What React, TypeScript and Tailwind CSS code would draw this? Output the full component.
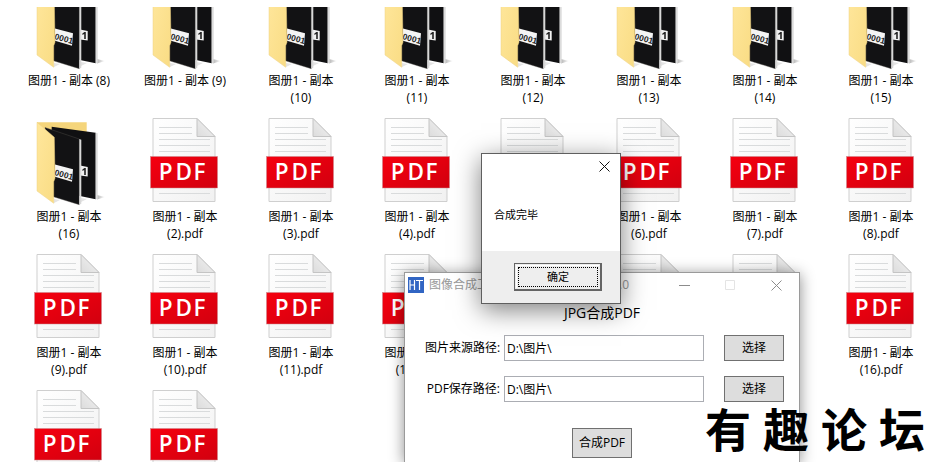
import React, { useState } from 'react';

type FileKind = 'folder' | 'pdf';

interface FileItem {
  id: number;
  kind: FileKind;
  name?: string;
}

const folders: FileItem[] = [8, 9, 10, 11, 12, 13, 14, 15, 16].map((n) => ({
  id: n,
  kind: 'folder',
  name: `图册1 - 副本 (${n})`,
}));

const pdfs: FileItem[] = [2, 3, 4, 5, 6, 7, 8, 9, 10, 11, 12, 13, 14, 15, 16].map((n) => ({
  id: 100 + n,
  kind: 'pdf',
  name: `图册1 - 副本 (${n}).pdf`,
}));

// The last two files sit below the fold, only their icons show
const files: FileItem[] = [...folders, ...pdfs, { id: 201, kind: 'pdf' }, { id: 202, kind: 'pdf' }];

const PdfIcon = () => (
  <svg width="80" height="88" viewBox="0 0 80 88" className="block">
    <defs>
      <linearGradient id="page" x1="0" y1="0" x2="1" y2="1">
        <stop offset="0" stopColor="#ffffff" />
        <stop offset="1" stopColor="#f1f1f1" />
      </linearGradient>
      <linearGradient id="fold" x1="0" y1="1" x2="1" y2="0">
        <stop offset="0" stopColor="#dcdcdc" />
        <stop offset="1" stopColor="#f4f4f4" />
      </linearGradient>
      <linearGradient id="band" x1="0" y1="0" x2="1" y2="1">
        <stop offset="0" stopColor="#f5000f" />
        <stop offset="1" stopColor="#d2000f" />
      </linearGradient>
    </defs>
    <path d="M8 .5h44l18 18v65H8z" fill="url(#page)" stroke="#cfcfcf" />
    <path d="M52 .5v18h18z" fill="url(#fold)" stroke="#c4c4c4" strokeLinejoin="round" />
    <path d="M14 9.5h33M14 15.5h33M14 21.5h51M14 27.5h51M14 33.5h51M14 75.5h51" stroke="#d9dbdc" />
    <rect x="5.5" y="38.5" width="67" height="31.5" fill="url(#band)" stroke="#c98a8e" strokeWidth=".5" />
    <text
      x="13.8 30.4 48.6"
      y="62"
      fill="#fff"
      fontFamily="Open Sans, Noto Sans, sans-serif"
      fontSize="22.5"
      fontWeight="600"
    >
      PDF
    </text>
  </svg>
);

const FolderIcon = () => (
  <svg width="80" height="88" viewBox="0 0 80 88" className="block">
    <defs>
      <linearGradient id="flap" x1="0" y1="0" x2="1" y2="1">
        <stop offset="0" stopColor="#ffe79c" />
        <stop offset="1" stopColor="#f9dc84" />
      </linearGradient>
      <linearGradient id="shade" x1="0" y1="0" x2="1" y2="0">
        <stop offset="0" stopColor="#b5b5b5" />
        <stop offset="1" stopColor="#ffffff" />
      </linearGradient>
    </defs>
    <path d="M68 77l8 2-8 2.5z" fill="url(#shade)" />
    <path d="M25 81l6 1-6 3z" fill="#e4e4e4" />
    <path d="M52 80l6 1-6 3z" fill="#e4e4e4" />
    <path d="M8 4.3h49.7V40H8z" fill="#f5d57b" />
    <path d="M22.7 8.7l44 6v66.6L22 72z" fill="#101012" />
    <path d="M66.7 14.7l2 .6v65.5l-2 .7z" fill="#dcdcdc" />
    <path d="M51 47.6l7.7 1.3v9.6L51 57.5z" fill="#f2f2f2" />
    <path d="M53.4 51.6l2-1.6h1.4v7h-1.6v-5l-1.8 1z" fill="#222" />
    <path d="M16 9.5l34.3 11.5v65.7L22 78z" fill="#121214" stroke="#55534e" strokeWidth=".4" />
    <path d="M50.3 21l2 .7v64l-2 1z" fill="#d8d8d8" />
    <path d="M26 46.5l18 4.8-1 12.4-17-5z" fill="#f4f4f4" />
    <text
      x="25"
      y="57"
      transform="rotate(15 25 57)"
      fill="#1c1c1c"
      fontFamily="Liberation Sans, Arial, sans-serif"
      fontSize="8.5"
      fontWeight="700"
    >
      0001
    </text>
    <path d="M8 4.3l17.3 15 .7 41-1.3 3.4v21.6L8 73z" fill="url(#flap)" stroke="#ecd184" strokeWidth=".5" />
  </svg>
);

const FileTile = ({ file }: { file: FileItem }) => (
  <div className="flex h-[136px] flex-col items-center">
    {file.kind === 'folder' ? <FolderIcon /> : <PdfIcon />}
    {file.name && (
      <div className="mt-[2px] w-[86px] text-center text-xs leading-[17px] text-black">{file.name}</div>
    )}
  </div>
);

interface PathRowProps {
  id: string;
  label: string;
  value: string;
  onChange: (value: string) => void;
}

const PathRow = ({ id, label, value, onChange }: PathRowProps) => (
  <div className="flex items-center">
    <label htmlFor={id} className="w-[75px] text-right text-xs whitespace-nowrap">
      {label}
    </label>
    <input
      id={id}
      type="text"
      value={value}
      onChange={(e) => onChange(e.target.value)}
      className="ml-1 h-[26px] min-w-0 flex-1 border border-[#abadb3] bg-white px-[2px] text-xs outline-none"
    />
    <button type="button" className="ml-5 h-[26px] w-[60px] border border-[#707070] bg-[#dddddd] text-xs">
      选择
    </button>
  </div>
);

const ConverterWindow = () => {
  const [source, setSource] = useState('D:\\图片\\');
  const [target, setTarget] = useState('D:\\图片\\');

  return (
    <section className="absolute top-[272px] bottom-0 left-[404px] w-[396px] border border-b-0 border-[#9a9a9a] bg-white shadow-[0_2px_14px_rgba(0,0,0,0.45)]">
      <header className="flex h-6 items-center pl-[3px] text-xs text-[#999999]">
        <svg width="16" height="16" viewBox="0 0 16 16">
          <rect width="16" height="16" fill="#3165c3" />
          <path d="M2 3v10M6.5 3v10M2 8h4.5M8 3.5h7M11.5 3.5V13" stroke="#fff" strokeWidth="1.2" fill="none" />
        </svg>
        <div className="ml-[5px] flex w-[200px] justify-between">
          <span>图像合成工具</span>
          <span>1.0</span>
        </div>
        <div className="ml-auto flex">
          <button type="button" aria-label="最小化" className="flex h-6 w-[46px] items-center justify-center">
            <svg width="11" height="11" viewBox="0 0 11 11" stroke="#8c8c8c">
              <path d="M0 5.5h11" />
            </svg>
          </button>
          <button type="button" disabled aria-label="最大化" className="flex h-6 w-[46px] items-center justify-center">
            <svg width="11" height="11" viewBox="0 0 11 11" fill="none" stroke="#e4e4e4">
              <path d="M.5.5h9v9h-9z" />
            </svg>
          </button>
          <button type="button" aria-label="关闭" className="flex h-6 w-[46px] items-center justify-center">
            <svg width="11" height="11" viewBox="0 0 11 11" stroke="#8c8c8c">
              <path d="M.5.5l10 10M10.5.5l-10 10" />
            </svg>
          </button>
        </div>
      </header>
      <h1 className="mt-[6px] text-center text-sm leading-5">JPG合成PDF</h1>
      <form className="mt-3 flex flex-col gap-[15px] pr-[15px] pl-5" onSubmit={(e) => e.preventDefault()}>
        <PathRow id="source" label="图片来源路径:" value={source} onChange={setSource} />
        <PathRow id="target" label="PDF保存路径:" value={target} onChange={setTarget} />
      </form>
      <div className="mt-[26px] flex justify-center">
        <button type="button" className="h-[30px] w-[60px] border border-[#707070] bg-[#dddddd] text-xs whitespace-nowrap">
          合成PDF
        </button>
      </div>
    </section>
  );
};

const MessageBox = () => (
  <div
    role="dialog"
    aria-label="合成完毕"
    className="absolute top-[153px] left-[481px] w-[140px] border border-[#5f5f5f] bg-white shadow-[0_6px_24px_rgba(0,0,0,0.5)]"
  >
    <div className="flex justify-end">
      <button type="button" aria-label="关闭" className="flex h-6 w-[31px] items-center justify-center">
        <svg width="11" height="11" viewBox="0 0 11 11" stroke="#111">
          <path d="M.5.5l10 10M10.5.5l-10 10" />
        </svg>
      </button>
    </div>
    <p className="px-3 pt-7 pb-7 text-[11px] leading-[17px]">合成完毕</p>
    <div className="flex justify-end bg-[#eeeeee] pt-3 pr-[18px] pb-3">
      <button type="button" className="h-7 w-[88px] border border-r-2 border-b-2 border-[#646464] bg-[#eeeeee] p-px text-[11px]">
        <span className="flex h-full items-center justify-center border-t border-l border-white p-px">
          <span className="flex h-full w-full items-center justify-center border border-dotted border-black">确定</span>
        </span>
      </button>
    </div>
  </div>
);

const App = () => {
  return (
    <div className="relative h-screen w-full overflow-hidden bg-white pt-[7px] font-['Open_Sans','Noto_Sans_CJK_SC',sans-serif] text-black">
      <main className="overflow-hidden">
        <div className="-mt-[25px] grid grid-cols-[repeat(auto-fill,116px)] pl-[11px]">
          {files.map((file) => (
            <FileTile key={file.id} file={file} />
          ))}
        </div>
      </main>
      <ConverterWindow />
      <MessageBox />
      <div className="pointer-events-none absolute top-[402px] left-[705px] flex gap-3 font-['Noto_Sans_CJK_SC',sans-serif] text-[46px] leading-[50px] font-bold">
        <span>有</span>
        <span>趣</span>
        <span>论</span>
        <span>坛</span>
      </div>
    </div>
  );
};

export default App;
